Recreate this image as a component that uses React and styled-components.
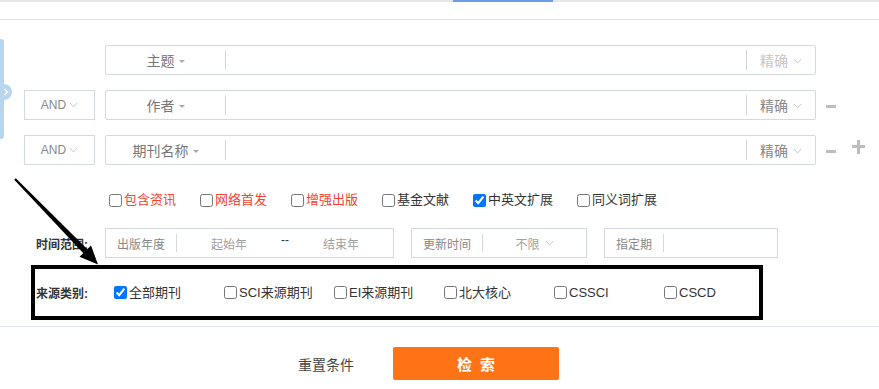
import React from "react";
import styled, { createGlobalStyle } from "styled-components";

const GlobalStyle = createGlobalStyle`
  html, body {
    margin: 0;
    padding: 0;
    background: #fff;
  }
  body {
    font-family: "Liberation Sans", "Noto Sans CJK SC", sans-serif;
    overflow: hidden;
  }
`;

const fields = [
  { logic: null, name: "主题", muted: true, minus: false, plus: false },
  { logic: "AND", name: "作者", muted: false, minus: true, plus: false },
  { logic: "AND", name: "期刊名称", muted: false, minus: true, plus: true },
];

const options = [
  { label: "包含资讯", red: true },
  { label: "网络首发", red: true },
  { label: "增强出版", red: true },
  { label: "基金文献" },
  { label: "中英文扩展", checked: true },
  { label: "同义词扩展" },
];

const sources = [
  { label: "全部期刊", checked: true },
  { label: "SCI来源期刊" },
  { label: "EI来源期刊" },
  { label: "北大核心" },
  { label: "CSSCI" },
  { label: "CSCD" },
];

function Chevron() {
  return (
    <ChevronSvg width="9" height="6" viewBox="0 0 9 6">
      <polyline points="1,1 4.5,5 8,1" fill="none" stroke="#c8c8c8" strokeWidth="1" />
    </ChevronSvg>
  );
}

function App() {
  return (
    <Page>
      <GlobalStyle />
      <TopStrip />
      <TopBar />

      <SideTab>
        <SideKnob>
          <svg width="8" height="8" viewBox="0 0 8 8">
            <polyline points="2.5,1 5.5,4 2.5,7" fill="none" stroke="#fff" strokeWidth="1.5" />
          </svg>
        </SideKnob>
      </SideTab>

      <Form>
        {fields.map((f) => (
          <QueryRow key={f.name}>
            <LogicBox $hidden={!f.logic}>
              AND <Chevron />
            </LogicBox>
            <FieldBox>
              <FieldSelect>
                {f.name}
                <Caret />
              </FieldSelect>
              <VDivider />
              <FieldInput />
              <VDivider />
              <MatchSelect $muted={f.muted}>
                精确 <Chevron />
              </MatchSelect>
            </FieldBox>
            <Ops>
              {f.minus && <Minus />}
              {f.plus && <Plus />}
            </Ops>
          </QueryRow>
        ))}

        <CheckRow>
          {options.map((o) => (
            <CheckItem key={o.label} $red={o.red}>
              <Checkbox type="checkbox" defaultChecked={!!o.checked} />
              {o.label}
            </CheckItem>
          ))}
        </CheckRow>

        <TimeRow>
          <RowLabel>时间范围:</RowLabel>
          <TimeBox $w={289}>
            <BoxLabel>出版年度</BoxLabel>
            <SmallDivider />
            <Placeholder>起始年</Placeholder>
            <Dash>--</Dash>
            <Placeholder>结束年</Placeholder>
          </TimeBox>
          <TimeBox $w={176}>
            <BoxLabel>更新时间</BoxLabel>
            <SmallDivider />
            <Placeholder>
              不限 <Chevron />
            </Placeholder>
          </TimeBox>
          <TimeBox $w={174}>
            <BoxLabel>指定期</BoxLabel>
            <SmallDivider />
          </TimeBox>
        </TimeRow>

        <SourceBox>
          <SourceLabel>来源类别:</SourceLabel>
          {sources.map((s) => (
            <SourceItem key={s.label}>
              <Checkbox type="checkbox" defaultChecked={!!s.checked} />
              {s.label}
            </SourceItem>
          ))}
        </SourceBox>
      </Form>

      <Footer>
        <ResetLink>重置条件</ResetLink>
        <SearchButton>检索</SearchButton>
      </Footer>

      <Annotation width="879" height="389" viewBox="0 0 879 389">
        <polygon points="15.8,178.2 14.2,179.8 83.4,253.2 87.4,249.2" fill="#000" />
        <polygon points="98,264.5 91,245.5 79.5,256.8" fill="#000" />
      </Annotation>
    </Page>
  );
}

const Page = styled.div`
  position: relative;
  width: 879px;
  height: 389px;
  overflow: hidden;
`;

const TopStrip = styled.div`
  height: 2px;
  background: linear-gradient(
    to right,
    #e6e6e6 453px,
    #6b9de9 453px,
    #6b9de9 553px,
    #e6e6e6 553px
  );
`;

const TopBar = styled.div`
  height: 17px;
  border-bottom: 1px solid #e2e2e2;
`;

const SideTab = styled.div`
  position: absolute;
  left: 0;
  top: 39px;
  width: 4px;
  height: 100px;
  background: #b8d6ee;
  border-radius: 0 3px 3px 0;
`;

const SideKnob = styled.div`
  position: absolute;
  left: -4px;
  top: 45px;
  width: 16px;
  height: 16px;
  border-radius: 50%;
  background: #b8d6ee;
  display: flex;
  align-items: center;
  justify-content: flex-end;
  padding-right: 2px;
  box-sizing: border-box;
`;

const Form = styled.div`
  padding: 25px 0 6px 24px;
  border-bottom: 1px solid #dde2ea;
`;

const QueryRow = styled.div`
  display: flex;
  align-items: center;
  height: 30px;

  & + & {
    margin-top: 15px;
  }
`;

const LogicBox = styled.div`
  visibility: ${(p) => (p.$hidden ? "hidden" : "visible")};
  width: 71px;
  height: 30px;
  box-sizing: border-box;
  border: 1px solid #d5dae2;
  display: flex;
  align-items: center;
  justify-content: center;
  gap: 3px;
  font-size: 12px;
  color: #888;
`;

const ChevronSvg = styled.svg`
  display: inline-block;
  flex-shrink: 0;
`;

const FieldBox = styled.div`
  margin-left: 10px;
  width: 711px;
  height: 30px;
  box-sizing: border-box;
  border: 1px solid #d3d8e1;
  border-radius: 2px;
  display: flex;
  align-items: center;
`;

const FieldSelect = styled.div`
  width: 119px;
  display: flex;
  align-items: center;
  justify-content: center;
  gap: 4px;
  font-size: 14px;
  color: #777;
  line-height: 20px;
  margin-top: 1px;
`;

const Caret = styled.span`
  width: 0;
  height: 0;
  border-left: 3px solid transparent;
  border-right: 3px solid transparent;
  border-top: 3px solid #aaa;
  margin-top: 1px;
`;

const VDivider = styled.div`
  width: 1px;
  height: 20px;
  background: #d4d4d4;
`;

const FieldInput = styled.div`
  flex: 1;
`;

const MatchSelect = styled.div`
  width: 68px;
  display: flex;
  align-items: center;
  justify-content: center;
  gap: 5px;
  font-size: 14px;
  line-height: 20px;
  margin-top: 1px;
  color: ${(p) => (p.$muted ? "#c6c6c6" : "#888")};
`;

const Ops = styled.div`
  display: flex;
  align-items: center;
  align-self: stretch;
  margin-left: 10px;
  gap: 16px;
`;

const Minus = styled.span`
  width: 10px;
  height: 3px;
  margin-top: 2px;
  background: #bdbdbd;
`;

const Plus = styled.span`
  position: relative;
  width: 13px;
  height: 14px;
  align-self: flex-start;
  margin-top: 5px;

  &::before,
  &::after {
    content: "";
    position: absolute;
    background: #bdbdbd;
  }
  &::before {
    left: 0;
    right: 0;
    top: 5px;
    height: 3px;
  }
  &::after {
    top: 0;
    bottom: 0;
    left: 5px;
    width: 3px;
  }
`;

const CheckRow = styled.div`
  display: flex;
  align-items: center;
  height: 20px;
  margin: 25px 0 0 81px;
`;

const Checkbox = styled.input`
  width: 13px;
  height: 13px;
  margin: 0 2px 0 4px;
  flex-shrink: 0;
`;

const CheckItem = styled.label`
  display: flex;
  align-items: center;
  flex-shrink: 0;
  margin-right: 20px;
  font-size: 13px;
  line-height: 18px;
  color: ${(p) => (p.$red ? "#f4432f" : "#333")};
`;

const TimeRow = styled.div`
  display: flex;
  align-items: center;
  height: 30px;
  margin-top: 18px;
`;

const RowLabel = styled.div`
  width: 81px;
  flex-shrink: 0;
  padding-left: 12px;
  box-sizing: border-box;
  font-size: 12px;
  font-weight: bold;
  color: #333;
`;

const TimeBox = styled.div`
  width: ${(p) => p.$w}px;
  flex-shrink: 0;
  height: 30px;
  box-sizing: border-box;
  border: 1px solid #d3d8e1;
  display: flex;
  align-items: center;

  & + & {
    margin-left: 17px;
  }
`;

const BoxLabel = styled.span`
  padding: 0 11px 0 11px;
  font-size: 12px;
  color: #888;
`;

const SmallDivider = styled.div`
  width: 1px;
  height: 18px;
  background: #d8d8d8;
`;

const Placeholder = styled.span`
  flex: 1;
  display: flex;
  align-items: center;
  justify-content: center;
  gap: 5px;
  font-size: 12px;
  color: #a0a0a0;
`;

const Dash = styled.span`
  width: 8px;
  font-size: 12px;
  color: #333;
  margin-top: -6px;
`;

const SourceBox = styled.div`
  display: flex;
  align-items: center;
  width: 732px;
  height: 55px;
  box-sizing: border-box;
  margin: 7px 0 0 7px;
  padding-left: 1px;
  border: 4px solid #000;
`;

const SourceLabel = styled.div`
  width: 74px;
  flex-shrink: 0;
  font-size: 12px;
  font-weight: bold;
  color: #333;
`;

const SourceItem = styled.label`
  width: 110px;
  flex-shrink: 0;
  display: flex;
  align-items: center;
  font-size: 13px;
  line-height: 18px;
  color: #333;
`;

const Footer = styled.div`
  display: flex;
  align-items: center;
  padding: 20px 0 0 298px;
`;

const ResetLink = styled.span`
  font-size: 14px;
  color: #444;
  margin-right: 39px;
`;

const SearchButton = styled.button`
  width: 166px;
  height: 33px;
  border: none;
  border-radius: 2px;
  background: #fd7316;
  color: #fff;
  font-family: "Noto Sans CJK SC", sans-serif;
  font-size: 15px;
  font-weight: bold;
  letter-spacing: 8px;
  padding: 0 0 0 8px;
`;

const Annotation = styled.svg`
  position: absolute;
  left: 0;
  top: 0;
  pointer-events: none;
`;

export default App;
